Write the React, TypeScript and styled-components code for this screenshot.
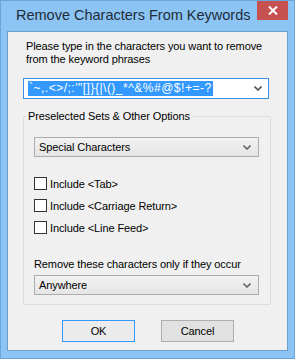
import React from 'react';
import styled, {createGlobalStyle} from 'styled-components';

const GlobalStyle = createGlobalStyle`
  html, body {
    margin: 0;
    padding: 0;
    background: #8cc4f4;
  }
  body {
    font-family: "Liberation Sans", Arial, sans-serif;
  }
`

const Window = styled.div`
  width: 295px;
  height: 359px;
  box-sizing: border-box;
  background: #8cc4f4;
  border: 1px solid #6aa6dc;
  display: flex;
  flex-direction: column;
  overflow: hidden;
`

const TitleBar = styled.div`
  height: 30px;
  flex-shrink: 0;
  display: flex;
  align-items: flex-start;
`

const Title = styled.div`
  flex: 1;
  padding: 4px 0 0 15px;
  font-size: 14.5px;
  line-height: 20px;
  color: #1f2d3a;
  white-space: nowrap;
`

const CloseButton = styled.div`
  width: 31px;
  height: 20px;
  margin-top: -1px;
  margin-right: 6px;
  background: #c75050;
  display: flex;
  align-items: center;
  justify-content: center;
`

const Client = styled.div`
  flex: 1;
  margin: 0 6px 7px 6px;
  background: #f0f0f0;
  border: 1px solid #6e9dcb;
  display: flex;
  flex-direction: column;
  padding: 8px 0 0 15px;
  font-size: 11px;
  letter-spacing: -0.1px;
  color: #000;
`

const Prompt = styled.div`
  margin-left: 3px;
  line-height: 13px;
  width: 250px;
`

const ComboInput = styled.div`
  margin-top: 12px;
  width: 246px;
  height: 21px;
  flex-shrink: 0;
  box-sizing: border-box;
  border: 1px solid #3c8ee4;
  background: #fff;
  display: flex;
  align-items: center;
  padding: 0 6px 0 4px;
`

const Selected = styled.span`
  background: #3399ff;
  color: #fff;
  font-size: 12px;
  line-height: 15px;
  letter-spacing: 0.5px;
  white-space: nowrap;
  padding: 0 1px;
`

const Gap = styled.span`
  flex: 1;
`

const Group = styled.fieldset`
  margin: 11px 0 0 0;
  padding: 14px 0 9px 10px;
  width: 248px;
  box-sizing: border-box;
  border: 1px solid #dcdcdc;
  border-radius: 2px;
  min-inline-size: 0;
`

const Legend = styled.legend`
  padding: 0 2px;
  margin-left: -8px;
  line-height: 13px;
`

const Select = styled.div`
  width: 225px;
  height: 20px;
  box-sizing: border-box;
  border: 1px solid #acacac;
  background: linear-gradient(#f2f2f2, #e5e5e5);
  display: flex;
  align-items: center;
  padding: 0 7px 0 4px;
`

const SelectText = styled.span`
  flex: 1;
`

const CheckList = styled.div`
  display: flex;
  flex-direction: column;
  gap: 9px;
  margin-top: 20px;
`

const CheckRow = styled.label`
  display: flex;
  align-items: center;
  gap: 3px;
  height: 13px;
`

const Box = styled.span`
  width: 13px;
  height: 13px;
  box-sizing: border-box;
  border: 1px solid #333;
  background: #fff;
`

const Caption = styled.div`
  margin-top: 24px;
  margin-bottom: 4px;
  line-height: 13px;
`

const Buttons = styled.div`
  display: flex;
  gap: 26px;
  margin: 15px 0 0 39px;
`

const Button = styled.div<{ $primary?: boolean }>`
  width: 73px;
  height: 22px;
  box-sizing: border-box;
  border: 1px solid ${p => p.$primary ? '#3399ff' : '#adadad'};
  background: ${p => p.$primary ? '#ebebeb' : '#e1e1e1'};
  display: flex;
  align-items: center;
  justify-content: center;
`

const Chevron = ({color = '#555'}: { color?: string }) => (
    <svg width="8" height="5" viewBox="0 0 8 5">
        <path d="M0.5 0.5 L4 4 L7.5 0.5" stroke={color} strokeWidth="1.6" fill="none"/>
    </svg>
)

const App = () => {
    return (<>
        <GlobalStyle/>
        <Window>
            <TitleBar>
                <Title>Remove Characters From Keywords</Title>
                <CloseButton>
                    <svg width="10" height="9" viewBox="0 0 10 9">
                        <path d="M1 0.5 L9 8.5 M9 0.5 L1 8.5" stroke="#fff" strokeWidth="2"/>
                    </svg>
                </CloseButton>
            </TitleBar>
            <Client>
                <Prompt>Please type in the characters you want to remove from the keyword phrases</Prompt>
                <ComboInput>
                    <Selected>{'`~,.<>/;:\'"[]}{|\\()_*^&%#@$!+=-?'}</Selected>
                    <Gap/>
                    <Chevron/>
                </ComboInput>
                <Group>
                    <Legend>Preselected Sets &amp; Other Options</Legend>
                    <Select>
                        <SelectText>Special Characters</SelectText>
                        <Chevron color="#666"/>
                    </Select>
                    <CheckList>
                        <CheckRow><Box/>Include &lt;Tab&gt;</CheckRow>
                        <CheckRow><Box/>Include &lt;Carriage Return&gt;</CheckRow>
                        <CheckRow><Box/>Include &lt;Line Feed&gt;</CheckRow>
                    </CheckList>
                    <Caption>Remove these characters only if they occur</Caption>
                    <Select>
                        <SelectText>Anywhere</SelectText>
                        <Chevron color="#666"/>
                    </Select>
                </Group>
                <Buttons>
                    <Button $primary>OK</Button>
                    <Button>Cancel</Button>
                </Buttons>
            </Client>
        </Window>
    </>);
};

export default App;
